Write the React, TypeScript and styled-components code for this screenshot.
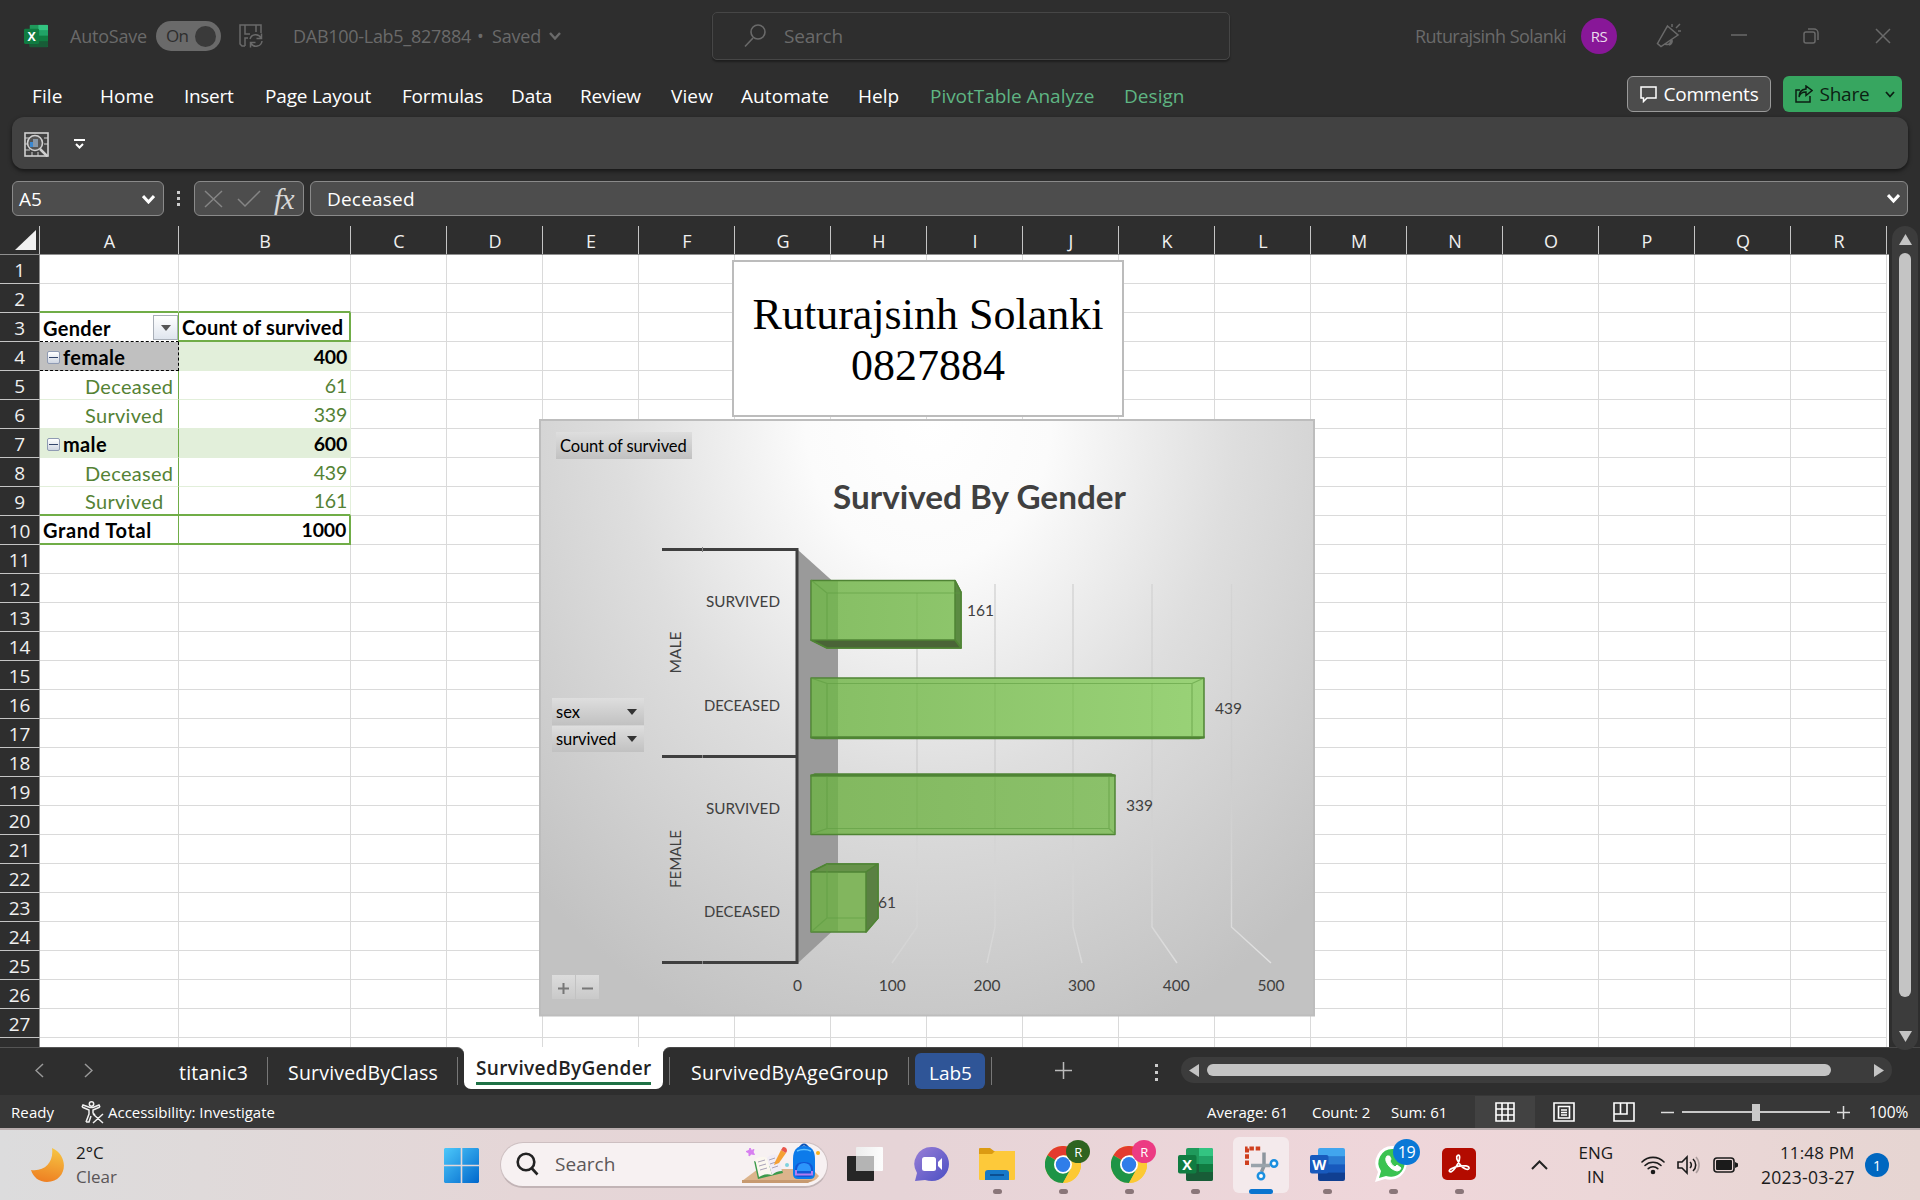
import React from "react";
import styled, { createGlobalStyle } from "styled-components";

const UI = '"Open Sans", "Noto Sans", sans-serif';
const CAL = 'Lato, "Open Sans", sans-serif';

const Global = createGlobalStyle`
  * { box-sizing: border-box; }
  body { margin: 0; background: #2e2e2e; overflow: hidden; }
  svg { display: block; flex: none; }
`;

const Screen = styled.div`
  width: 1920px; height: 1200px; overflow: hidden;
  display: flex; flex-direction: column;
  font-family: ${UI}; color: #fff; background: #2e2e2e;
`;

const Gap = styled.div<{ $w: number }>`flex: none; width: ${(p) => p.$w}px;`;

const T = styled.span<{ $w?: number; $size?: number; $ls?: number; $c?: string; $b?: number; $ml?: number; $cal?: boolean }>`
  flex: none; white-space: nowrap;
  width: ${(p) => (p.$w ? p.$w + "px" : "auto")};
  margin-left: ${(p) => p.$ml ?? 0}px;
  font-family: ${(p) => (p.$cal ? CAL : UI)};
  font-size: ${(p) => p.$size ?? 18}px;
  letter-spacing: ${(p) => p.$ls ?? 0}px;
  font-weight: ${(p) => p.$b ?? 400};
  color: ${(p) => p.$c ?? "inherit"};
  line-height: 24px;
`;
const Fx = styled(T)`font-family: "Liberation Serif", serif; font-style: italic;`;

/* ---------- title bar ---------- */
const TitleBar = styled.header`
  height: 72px; flex: none; display: flex; align-items: center; color: #6a6a6a;
`;
const Toggle = styled.div`
  width: 65px; height: 30px; border-radius: 15px; margin: 0 18px 0 9px; padding: 0 5px 0 10px;
  background: #6a6a6a; color: #2e2e2e; display: flex; align-items: center; justify-content: space-between;
`;
const Knob = styled.i`width: 21px; height: 21px; border-radius: 50%; background: #3a3a3a;`;
const TopSearch = styled.div`
  width: 518px; height: 48px; border: 1px solid #464646; border-radius: 5px; margin-left: 151px;
  padding-left: 31px; display: flex; align-items: center; box-shadow: 0 2px 2px rgba(0,0,0,.35);
`;
const Avatar = styled.div`
  width: 36px; height: 36px; border-radius: 50%; background: #881798; color: #eadcec;
  display: flex; align-items: center; justify-content: center; margin-left: 15px;
`;

/* ---------- menu ---------- */
const Menu = styled.nav`height: 45px; flex: none; display: flex; align-items: center; padding-top: 3px;`;
const Button = styled.button<{ $green?: boolean }>`
  height: 36px; width: ${(p) => (p.$green ? 119 : 144)}px; border-radius: 6px; padding: 0 0 0 12px; margin: -4px 0 0;
  border: ${(p) => (p.$green ? "none" : "1px solid #9a9a9a")};
  background: ${(p) => (p.$green ? "#37a660" : "#4c4c4c")};
  color: ${(p) => (p.$green ? "#0c1f13" : "#fff")};
  display: flex; align-items: center;
`;
const Ribbon = styled.div`
  height: 52px; flex: none; margin: 0 12px; border-radius: 12px; background: #424242;
  box-shadow: 0 2px 4px rgba(0,0,0,.55); display: flex; align-items: center; padding: 2px 0 0 12px;
`;
const FormulaBar = styled.div`
  flex: none; height: 57px; padding: 12px 12px 0; display: flex; align-items: flex-start;
`;
const Box = styled.div<{ $w?: number; $pl: number }>`
  height: 35px; border: 1px solid #8a8a8a; border-radius: 6px; background: #4d4d4d;
  display: flex; align-items: center; padding-left: ${(p) => p.$pl}px; padding-right: 7px;
  ${(p) => (p.$w ? `width:${p.$w}px;flex:none;` : "flex:1;justify-content:space-between;")}
`;

/* ---------- grid ---------- */
const Work = styled.div`height: 821px; flex: none; display: flex; position: relative;`;
const Sheet = styled.div`width: 1889px; height: 821px; overflow: hidden;`;
const HeadRow = styled.div`display: flex; height: 29px; border-bottom: 1px solid #8f8f8f;`;
const ColHead = styled.div<{ $w: number }>`
  width: ${(p) => p.$w}px; flex: none; border-right: 1px solid #c4c4c4; color: #f0f0f0;
  font-size: 18px; line-height: 31px; text-align: center; padding-left: 1px;
`;
const Corner = styled.div`
  width: 40px; flex: none; border-right: 1px solid #c4c4c4; display: flex; align-items: flex-end; justify-content: flex-end; padding: 0 3px 4px;
`;
const Row = styled.div`display: flex; height: 29px; background: #fff;`;
const RowHead = styled.div`
  width: 40px; flex: none; background: #2e2e2e; border-right: 1px solid #8f8f8f; border-bottom: 1px solid #c4c4c4;
  color: #f0f0f0; font-size: 19px; line-height: 30px; text-align: center; letter-spacing: -0.2px;
`;
const Cell = styled.div<{ $w: number; $bg?: string; $bb?: string; $br?: string; $right?: boolean; $pl?: number }>`
  width: ${(p) => p.$w}px; flex: none; display: flex; align-items: center; color: #000;
  justify-content: ${(p) => (p.$right ? "flex-end" : "flex-start")};
  padding: 1px 3px 0 ${(p) => p.$pl ?? 3}px;
  background: ${(p) => p.$bg ?? "#fff"};
  border-bottom: ${(p) => p.$bb ?? "1px solid #dadada"};
  border-right: ${(p) => p.$br ?? "1px solid #dadada"};
`;
const FilterBtn = styled.div`
  width: 25px; height: 25px; margin: 0 -3px 0 auto; border: 1px solid #a9afb8; flex: none;
  background: linear-gradient(#fff, #dfe5ee); display: flex; align-items: center; justify-content: center;
`;
const Minus = styled.div`
  width: 13px; height: 13px; flex: none; border: 1px solid #8f9bb3; border-radius: 2px; margin: 1px 3px 0 0;
  background: linear-gradient(#fff, #cfd6e2); display: flex; align-items: center; justify-content: center;
  &::after { content: ""; width: 9px; height: 1px; background: #34466b; }
`;
const NameCard = styled.div`
  position: absolute; left: 732px; top: 34px; width: 392px; height: 157px; background: #fff; border: 2px solid #bcbcbc;
  display: flex; flex-direction: column; align-items: center; padding-top: 27px; color: #000;
  font: 44px/51px "Liberation Serif", serif;
`;
const ChartBox = styled.div`position: absolute; left: 539px; top: 192px; width: 777px; height: 600px;`;
const Field = styled.div<{ $x: number; $y: number; $w: number; $h?: number }>`
  position: absolute; left: ${(p) => p.$x}px; top: ${(p) => p.$y}px; width: ${(p) => p.$w}px; height: ${(p) => p.$h ?? 27}px;
  background: linear-gradient(#dedede, #c1c1c1); color: #000; display: flex; align-items: center; justify-content: space-between; padding: 0 7px 0 4px;
`;
const SmallField = styled(Field)`
  padding: 3px 0 0; justify-content: center; background: linear-gradient(#dcdcdc, #c9c9c9);
`;
const VScroll = styled.div`
  width: 26px; height: 824px; margin-left: 3px; background: #3c3c3c; border-radius: 13px; flex: none;
  display: flex; flex-direction: column; align-items: center; padding: 8px 0;
`;
const VThumb = styled.div`width: 12px; height: 744px; border-radius: 6px; background: #c4c4c4; margin: 8px 0 auto;`;

/* ---------- tabs / status ---------- */
const TabBar = styled.div`height: 48px; flex: none; display: flex; align-items: flex-start; background: linear-gradient(#fff 10px, #2e2e2e 10px);`;
const TabsLeft = styled.div`
  width: 464px; height: 48px; display: flex; align-items: center; padding-top: 2px; background: #2e2e2e;
  border-top: 1px solid #555; border-top-right-radius: 7px;
`;
const TabsRight = styled.div`
  flex: 1; height: 48px; display: flex; align-items: center; background: #2e2e2e; padding-top: 2px;
  border-top: 1px solid #484848; border-top-left-radius: 7px;
`;
const ActiveTab = styled.div`
  width: 199px; height: 42px; background: #fff; border-radius: 0 0 7px 7px; padding: 8px 12px 0; color: #222;
`;
const TabText = styled.div`width: 175px; height: 30px; border-bottom: 3px solid #1e7145; display: flex; align-items: center; padding-bottom: 2px;`;
const Sep = styled.i<{ $ml: number }>`width: 1px; height: 28px; background: #777; margin-left: ${(p) => p.$ml}px; margin-top: -4px; flex: none;`;
const BlueTab = styled.div`
  width: 70px; height: 36px; border-radius: 6px; background: #2f5597; margin: -3px 0 0 6px; display: flex; align-items: center; justify-content: center; padding-top: 3px;
`;
const HScroll = styled.div`
  width: 711px; height: 26px; border-radius: 13px; background: #3c3c3c; margin: -5px 0 0 22px; display: flex; align-items: center; padding: 0 8px;
`;
const HThumb = styled.div`width: 624px; height: 12px; border-radius: 6px; background: #c4c4c4; margin: 0 auto 0 8px;`;
const Raised = styled.div`margin-top: -4px; display: flex;`;
const Status = styled.div`height: 33px; flex: none; background: #373737; display: flex; align-items: center; padding-top: 1px;`;
const ViewOn = styled.div`width: 60px; height: 32px; background: #424242; margin-left: 28px; display: flex; align-items: center; justify-content: center;`;
const Slider = styled.div`width: 148px; height: 2px; background: #c8c8c8; margin-left: 8px; display: flex; justify-content: center; align-items: center;`;
const SliderThumb = styled.i`width: 8px; height: 17px; background: #c8c8c8; flex: none;`;

/* ---------- taskbar ---------- */
const TaskBar = styled.footer`
  height: 72px; flex: none; border-top: 2px solid #b9adae; display: flex; align-items: center; color: #1b1b1b;
  background: linear-gradient(90deg, #dcdcdd 0, #dfdada 200px, #e5d6d7 520px, #e6d4d7 900px, #efd6da 1400px, #ecd7d8 1600px, #e6d5d2 1920px);
`;
const TwoLine = styled.div<{ $ml: number; $align?: string; $w: number }>`
  display: flex; flex-direction: column; margin-left: ${(p) => p.$ml}px; width: ${(p) => p.$w}px; align-items: ${(p) => p.$align ?? "flex-start"}; margin-top: -1px;
`;
const Pill = styled.div`
  width: 328px; height: 46px; border-radius: 23px; background: #f7f1f2; border: 1px solid #cdbfc1; border-bottom: 2px solid #c2b4b6;
  margin: -1px 0 0 21px; display: flex; align-items: center; padding-left: 15px;
`;
const Slot = styled.div<{ $on?: boolean }>`
  width: 56px; height: 56px; margin: 0 5px; flex: none; position: relative; border-radius: 6px;
  display: flex; align-items: center; justify-content: center; padding-bottom: 2px; background: ${(p) => (p.$on ? "#f4eaec" : "transparent")};
`;
const Ind = styled.i<{ $on?: boolean }>`
  position: absolute; bottom: -1px; left: ${(p) => (p.$on ? 16 : 24)}px; width: ${(p) => (p.$on ? 24 : 9)}px; height: 5px; border-radius: 3px;
  background: ${(p) => (p.$on ? "#0a74cf" : "#8a7679")};
`;
const Badge = styled.span<{ $bg: string; $s: number; $x: number; $y: number; $fs: number }>`
  position: absolute; left: ${(p) => p.$x}px; top: ${(p) => p.$y}px; width: ${(p) => p.$s}px; height: ${(p) => p.$s - 1}px; border-radius: 50%;
  background: ${(p) => p.$bg}; color: #fff; font-size: ${(p) => p.$fs}px; display: flex; align-items: center; justify-content: center; letter-spacing: -0.5px;
`;
const NoticeDot = styled.div`
  width: 24px; height: 24px; border-radius: 50%; background: #0067c0; color: #fff; font-size: 14px; margin-left: 10px;
  display: flex; align-items: center; justify-content: center;
`;

/* ---------- icons ---------- */
const Stroke: React.FC<{ w: number; h?: number; vb?: string; c?: string; sw?: number; d: string; children?: React.ReactNode }> = ({ w, h = w, vb, c = "currentColor", sw = 1.5, d, children }) => (
  <svg width={w} height={h} viewBox={vb ?? `0 0 ${w} ${h}`} fill="none" stroke={c} strokeWidth={sw}>
    <path d={d} />
    {children}
  </svg>
);

const OfficeIcon = ({ size, letter, tile, cols = [] }: { size: number; letter: string; tile: string; cols?: string[] }) => (
  <svg width={size} height={size} viewBox="0 0 35 35">
    <clipPath id={`oc${letter}${size}`}><rect x="8" y="1" width="27" height="33" rx="2" /></clipPath>
    <g clipPath={`url(#oc${letter}${size})`}>
      {letter === "X" ? (
        <>
          <rect x="8" y="1" width="27" height="33" fill="#1f9a5b" />
          <rect x="21" y="1" width="14" height="9" fill="#33c481" />
          <rect x="21" y="9" width="14" height="9" fill="#21a366" />
          <rect x="8" y="17" width="14" height="9" fill="#185c37" />
          <rect x="21" y="17" width="14" height="9" fill="#107c41" />
          <rect x="8" y="25" width="27" height="9" fill="#185c37" />
        </>
      ) : cols.map((c, i) => <rect key={c} x="8" y={1 + i * 8.2} width="27" height="9" fill={c} />)}
    </g>
    <rect x="0" y={letter === "X" && size < 30 ? 7 : 8} width={size < 30 ? 22 : 18.5} height={size < 30 ? 22 : 18.5} rx="2" fill={tile} />
    <text x={size < 30 ? 11 : 9.2} y={size < 30 ? 24.5 : 22.5} fontSize={size < 30 ? 18 : 14.5} fontWeight="700" fontFamily={UI} fill="#fff" textAnchor="middle">{letter}</text>
  </svg>
);

const Chrome = () => (
  <svg width="36" height="37" viewBox="0 0 36 36" preserveAspectRatio="none">
    <circle cx="18" cy="18" r="18" fill="#fcc934" />
    <path d="M18 18 L2.400 9 A18 18 0 0 1 33.600 9 Z" fill="#e33b2e" />
    <path d="M18 18 L2.400 9 A18 18 0 0 0 18 36 L26 22 Z" fill="#1e9446" />
    <path d="M18 9 H33.600 A18 18 0 0 1 18 36 L26 22 Z" fill="#fcc934" />
    <circle cx="18" cy="18" r="9" fill="#fff" />
    <circle cx="18" cy="18" r="7.200" fill="#2f7de9" />
  </svg>
);

const Wifi = () => (
  <svg width="24" height="20" viewBox="0 0 24 20" fill="none" stroke="#1b1b1b" strokeWidth="1.600" strokeLinecap="round">
    <path d="M1 7 A15.500 15.500 0 0 1 23 7" /><path d="M4 10.500 A11.500 11.500 0 0 1 20 10.500" /><path d="M7.200 13.700 A7 7 0 0 1 16.800 13.700" />
    <circle cx="12" cy="17" r="1.500" fill="#1b1b1b" />
  </svg>
);

const Backpack = () => (
  <svg width="80" height="42" viewBox="0 0 80 42">
    <path d="M0 38 L16 26 H70 L77 33 Q73 39 66 39 H0 Z" fill="#dcb48c" />
    <path d="M0 37 H71 L66 40 H0 Z" fill="#c79a70" />
    <path d="M12 18 L16 36 L41 30 L40 27 Z" fill="#3c9a4a" />
    <path d="M13 16 Q20 12 25 15 L30 32 Q23 30 17 34 Z" fill="#fbf7ef" />
    <path d="M25 15 Q29 10 36 12 L40 28 Q34 28 30 32 Z" fill="#f1ecf5" />
    <path d="M16 19l7-2M17 23l7-2M18 27l7-2M27 17l6-2M28 21l6-2M30 25l6-2" stroke="#a9a3b8" strokeWidth="1" />
    <path d="M33 19 L39 7 L44 10 L37 20 L32 22 Z" fill="#f5a033" /><path d="M39 7 L41 4 Q45 4 45 8 L44 10 Z" fill="#e9564c" />
    <path d="M57 6 Q62 -3 67 6" fill="none" stroke="#0c54b8" strokeWidth="2" />
    <path d="M51 16 Q51 3 62 3 Q73 3 73 16 V31 Q73 36 68 36 H56 Q51 36 51 31 Z" fill="#0d7bea" />
    <path d="M55 8 Q62 5 69 8" fill="none" stroke="#5fc0ff" strokeWidth="1.500" />
    <path d="M53 26 Q53 19 62 19 Q71 19 71 26 V31 Q71 34 67 34 H57 Q53 34 53 31 Z" fill="#1257d6" />
    <path d="M55 26 Q56 20 62 20 Q68 20 69 26 V28 H55 Z" fill="#2d96fb" /><path d="M54 27V31.500 H70V28" fill="none" stroke="#b37cf0" strokeWidth="2" />
    <path d="M8 5 L9.500 7.500 L12 6.500 L11 9 L12.500 11.500 L9.500 11 L7 13 L7 10 L4 8.500 L7 7.500 Z" fill="#d77ff0" stroke="#d77ff0" />
    <circle cx="45" cy="22" r="2" fill="#7fd2de" /><circle cx="76" cy="10" r="2" fill="#f6b21b" />
  </svg>
);

const Arrow = ({ c = "#333" }: { c?: string }) => <svg width="10" height="6"><path d="M0 0H10L5 6Z" fill={c} /></svg>;

/* ---------- chart ---------- */
const EDGE = "#4f8434";
const Chart = () => {
  const txt = (x: number, y: number, s: string, len: number, anchor: "start" | "middle" | "end" = "middle") => (
    <text key={s + x + y} x={x} y={y} fontSize="15.500" textAnchor={anchor} textLength={len} lengthAdjust="spacingAndGlyphs">{s}</text>
  );
  const grid = [[917, 892], [995, 987], [1073, 1082], [1152, 1177], [1231.5, 1271]];
  return (
    <svg width="777" height="600" viewBox="539 418 777 600" fontFamily={CAL} fill="#404040">
      <defs>
        <radialGradient id="bg" gradientUnits="userSpaceOnUse" cx="928" cy="419" r="600" gradientTransform="translate(928 419) scale(.93 1.100) translate(-928 -419)">
          <stop offset="0" stopColor="#fff" /><stop offset=".22" stopColor="#fbfbfb" /><stop offset=".55" stopColor="#dedede" /><stop offset="1" stopColor="#c2c2c2" />
        </radialGradient>
        <linearGradient id="bar" gradientUnits="userSpaceOnUse" x1="811" x2="1204" y1="0" y2="0">
          <stop offset="0" stopColor="#86be64" /><stop offset="1" stopColor="#99d277" />
        </linearGradient>
        <linearGradient id="bar2" gradientUnits="userSpaceOnUse" x1="811" x2="1115" y1="0" y2="0">
          <stop offset="0" stopColor="#82b85f" /><stop offset="1" stopColor="#8bc16a" />
        </linearGradient>
        {grid.map(([a], i) => (
          <linearGradient key={a} id={`gl${i}`} gradientUnits="userSpaceOnUse" x1="0" x2="0" y1="584" y2="963">
            <stop offset="0" stopColor="#d4d4d4" /><stop offset=".5" stopColor="#cdcdcd" /><stop offset=".85" stopColor="#d8d8d8" stopOpacity={0.3 + i * 0.17} />
            <stop offset="1" stopColor="#e2e2e2" stopOpacity={0.4 + i * 0.15} />
          </linearGradient>
        ))}
      </defs>
      <rect x="540" y="420" width="774" height="595.500" fill="url(#bg)" stroke="#bdbdbd" strokeWidth="2" />
      {grid.map(([a, b], i) => <path key={a} d={`M${a} 584V927L${b} 963`} fill="none" stroke={`url(#gl${i})`} strokeWidth="1.400" />)}
      <path d="M798 550L838 586V926L798 963Z" fill="#9a9a9a" />

      <g stroke={EDGE} strokeWidth="1.500" strokeLinejoin="round">
        <path d="M811 580.500H955L961 592V648H827L811 640Z" fill="url(#bar)" />
        <path d="M955 580.500L961 592V648L955 640Z" fill="#5b8a42" />
        <path d="M811 640H955L961 648H827Z" fill="#4a6437" />
        <path d="M811 678H1204V738H811Z" fill="url(#bar)" />
        <path d="M811 737H1204L1199 738.500H815Z" fill={EDGE} />
        <path d="M811 775H1115V834.500H811Z" fill="url(#bar2)" />
        <path d="M815 774H1111L1115 776H811Z" fill={EDGE} />
        <path d="M811 872L827 864H878V918L866 932H811Z" fill="#82b65e" />
        <path d="M811 872L827 864H878L866 872Z" fill="#669249" />
        <path d="M866 872L878 864V918L866 932Z" fill="#5a8043" />
      </g>
      <g fill="#5f9c41" opacity=".35">
        <rect x="811" y="581" width="27" height="59" /><rect x="811" y="679" width="27" height="58" />
        <rect x="811" y="777" width="27" height="57" /><rect x="811" y="873" width="27" height="58" />
      </g>
      <g fill="none" stroke="#5f9c41" strokeOpacity=".6" strokeWidth="1.200">
        <path d="M811 580L827 593V639M827 593H960" />
        <path d="M811 678L827 683.500V737M827 683.500H1192V737M1192 683.500L1204 678" />
        <path d="M827 776V828.500L811 834M827 828.500H1109V776M1109 828.500L1115 834" />
        <path d="M827 864V918L811 932M827 918H866" />
        <path d="M917 593V639M917 683V736M995 683V736M1073 683V736M1152 683V736M917 776V828M995 776V828M1073 776V828" strokeOpacity=".2" />
      </g>

      <path d="M662 549.500H797V962.500H662M662 756.500H797" fill="none" stroke="#3f3f3f" strokeWidth="3" />
      <path d="M702.500 547V552M702.500 755V758M702.500 961V964" stroke="#888" strokeWidth="1" />

      <text x="979.500" y="508.500" fontSize="32" fontWeight="700" textAnchor="middle" textLength="293" lengthAdjust="spacingAndGlyphs">Survived By Gender</text>
      {txt(780, 606.5, "SURVIVED", 74, "end")}{txt(780, 711, "DECEASED", 76, "end")}
      {txt(780, 814, "SURVIVED", 74, "end")}{txt(780, 917, "DECEASED", 76, "end")}
      {txt(967, 616, "161", 27, "start")}{txt(1215, 713.5, "439", 27, "start")}{txt(1126, 811, "339", 27, "start")}{txt(878, 908, "61", 18, "start")}
      <g transform="translate(681 652.500) rotate(-90)">{txt(0, 0, "MALE", 42)}</g>
      <g transform="translate(681 859) rotate(-90)">{txt(0, 0, "FEMALE", 58)}</g>
      {[0, 100, 200, 300, 400, 500].map((n, i) => txt(797.5 + i * 94.7, 991, String(n), n ? 27 : 9))}
    </svg>
  );
};

/* ---------- grid data ---------- */
const G = "#70ad47", GT = "#548235", LG = "1px solid #e2efda";
const cols = ["C", "D", "E", "F", "G", "H", "I", "J", "K", "L", "M", "N", "O", "P", "Q", "R"];
const gb = `2px solid ${G}`, g1 = `1px solid ${G}`, dash = "1px dashed #000";

const Num = ({ children, bold }: { children: string; bold?: boolean }) => (
  <T $cal $size={19.5} $ls={-0.2} $b={bold ? 700 : 400} $c={bold ? "#000" : GT}>{children}</T>
);
const Bold = ({ children, ls = 0.3 }: { children: string; ls?: number }) => <T $cal $size={20} $b={700} $ls={ls}>{children}</T>;

const SubRow = ({ label, value, last }: { label: string; value: string; last?: boolean }) => (
  <>
    <Cell $w={139} $pl={45} $bb={last ? gb : LG} $br={g1}><T $cal $size={20} $ls={0.3} $c={GT}>{label}</T></Cell>
    <Cell $w={172} $right $bb={last ? gb : LG} $br={LG}><Num>{value}</Num></Cell>
  </>
);
const GroupRow = ({ label, value, active }: { label: string; value: string; active?: boolean }) => (
  <>
    <Cell $w={139} $bg={active ? "#c0c0c0" : "#e2efda"} $bb={active ? dash : LG} $br={active ? dash : g1} $pl={7}><Minus /><Bold ls={0.35}>{label}</Bold></Cell>
    <Cell $w={172} $right $bg="#e2efda" $bb={LG} $br={LG}><Num bold>{value}</Num></Cell>
  </>
);

const pivotCells = (n: number) => {
  switch (n) {
    case 2: return <><Cell $w={139} $bb={gb} /><Cell $w={172} $bb={gb} /></>;
    case 3: return <>
      <Cell $w={139} $bb={dash} $br={g1}><Bold>Gender</Bold><FilterBtn><Arrow c="#555" /></FilterBtn></Cell>
      <Cell $w={172} $bb={gb} $br={gb}><Bold ls={0.22}>Count of survived</Bold></Cell></>;
    case 4: return <GroupRow label="female" value="400" active />;
    case 5: return <SubRow label="Deceased" value="61" />;
    case 6: return <SubRow label="Survived" value="339" />;
    case 7: return <GroupRow label="male" value="600" />;
    case 8: return <SubRow label="Deceased" value="439" />;
    case 9: return <SubRow label="Survived" value="161" last />;
    case 10: return <>
      <Cell $w={139} $bb={gb} $br={g1}><Bold ls={0.6}>Grand Total</Bold></Cell>
      <Cell $w={172} $right $bb={gb} $br={gb}><Num bold>1000</Num></Cell></>;
    default: return <><Cell $w={139} /><Cell $w={172} /></>;
  }
};

/* label, left gap, width, letter spacing */
const menu: [string, number, number, number][] = [
  ["File", 32, 30, 0.1], ["Home", 38, 54, 0.07], ["Insert", 30, 50, -0.3], ["Page Layout", 31, 106, -0.16], ["Formulas", 31, 81, -0.21],
  ["Data", 28, 42, -0.1], ["Review", 27, 61, -0.2], ["View", 30, 42, 0.12], ["Automate", 28, 89, 0.07], ["Help", 28, 42, 0],
  ["PivotTable Analyze", 30, 166, -0.04], ["Design", 28, 62, 0.05],
];

export default function App() {
  return (
    <Screen>
      <Global />
      <TitleBar>
        <Gap $w={24} />
        <OfficeIcon size={24} letter="X" tile="#107c41" />
        <T $ml={22} $w={77} $ls={-0.21}>AutoSave</T>
        <Toggle><T $size={17} $w={22} $ls={-0.6}>On</T><Knob /></Toggle>
        <Stroke w={24} d="M6 22H3L1 20V1H22V9M6 1V10H11M17 1V8M6 22V14H9">
          <path d="M11 15A6 6 0 0 1 22 14M22.500 9.500V14.500H17.500M23 17A6 6 0 0 1 12 19.500M11.500 23.500V18.500H16.500" />
        </Stroke>
        <T $ml={30} $w={178} $ls={-0.28}>DAB100-Lab5_827884</T>
        <T $ml={6} $w={8}>•</T>
        <T $ml={7} $w={50} $ls={-0.2}>Saved</T>
        <Gap $w={7} />
        <Stroke w={12} h={8} sw={2.4} d="M1 1L6 6.500L11 1" />
        <TopSearch>
          <Stroke w={22} h={24} sw={1.6} d="M9 14L1 22.500"><circle cx="14" cy="8" r="7" /></Stroke>
          <T $ml={18} $size={19} $w={59} $ls={-0.2}>Search</T>
        </TopSearch>
        <T $ml={185} $w={151} $ls={-0.56}>Ruturajsinh Solanki</T>
        <Avatar><T $size={15} $ls={-0.5}>RS</T></Avatar>
        <Gap $w={39} />
        <Stroke w={26} d="M11.500 3L22 12L5 23.500L1.500 20.500ZM9 21A4 4 0 0 0 15 17M16 1V4M24 1L20 5M22 8H25M13 22A4 4 0 0 0 16 17" />
        <Gap $w={49} />
        <Stroke w={16} h={20} d="M0 9H16" />
        <Gap $w={56} />
        <Stroke w={16} d="M3 4H10A2 2 0 0 1 12 6V13A2 2 0 0 1 10 15H3A2 2 0 0 1 1 13V6A2 2 0 0 1 3 4ZM5 1H11A4 4 0 0 1 15 5V12" />
        <Gap $w={56} />
        <Stroke w={16} d="M1 1L15 15M15 1L1 15" />
      </TitleBar>

      <Menu>
        {menu.map(([s, ml, w, ls], i) => <T key={s} $size={19} $ml={ml} $w={w} $ls={ls} $c={i > 9 ? "#5fb583" : "#fff"}>{s}</T>)}
        <Gap $w={441} />
        <Button><Stroke w={17} h={17} d="M1 1H16V12H7L3.500 15.500V12H1Z" /><T $ml={6} $size={19} $w={96} $ls={-0.22}>Comments</T></Button>
        <Gap $w={12} />
        <Button $green>
          <Stroke w={18} h={18} d="M5 5H1V17H15V11M4 12C5 8 8 7 11 7V10.500L17 5.500L11 1V4C6 4.500 4 8 4 12Z" />
          <T $ml={6} $size={19} $w={51} $ls={-0.2}>Share</T><Gap $w={15} /><Stroke w={10} h={7} sw={1.8} d="M1 1L5 5.500L9 1" />
        </Button>
      </Menu>

      <Ribbon>
        <svg width="25" height="25" viewBox="0 0 25 25" fill="none" stroke="#d0d0d0" strokeWidth="1.600">
          <rect x="1" y="1" width="23" height="23" /><path d="M1 6H5M20 6H24M1 12H4M20 12H24M1 18H6M8 20V24M14 20V24" strokeWidth="1" />
          <circle cx="11" cy="11" r="7.500" fill="#555" /><rect x="6" y="10" width="4" height="5" fill="#3a87d0" stroke="none" /><rect x="9" y="7" width="5" height="8" fill="#8796a6" stroke="none" />
          <path d="M16 17L23.500 24.500" strokeWidth="2.500" />
        </svg>
        <Gap $w={25} />
        <Stroke w={11} h={10} sw={2} c="#fff" d="M0 1H11M2 5L5.500 8.500L9 5" />
      </Ribbon>

      <FormulaBar>
        <Box $w={152} $pl={6}>
          <T $size={19} $w={24}>A5</T><Gap $w={99} /><Stroke w={13} h={10} sw={3} c="#fff" d="M1 2L6.500 8L12 2" />
        </Box>
        <Gap $w={13} />
        <svg width="4" height="35" fill="#ccc"><rect y="10" width="3" height="3" /><rect y="16" width="3" height="3" /><rect y="22" width="3" height="3" /></svg>
        <Gap $w={13} />
        <Box $w={110} $pl={9}>
          <Stroke w={19} h={18} c="#858585" d="M1 1L18 17M18 1L1 17" /><Gap $w={14} />
          <Stroke w={24} h={18} c="#858585" d="M1 9L8 16L23 1" /><Gap $w={13} />
          <Fx $size={30} $ls={-1} $c="#d8d8d8">fx</Fx>
        </Box>
        <Gap $w={6} />
        <Box $pl={16}>
          <T $size={19} $w={88} $ls={0.2}>Deceased</T><Stroke w={13} h={10} sw={3} c="#fff" d="M1 1L6.500 7L12 1" />
        </Box>
      </FormulaBar>

      <Work>
        <Sheet>
          <HeadRow>
            <Corner><svg width="21" height="20"><path d="M21 0V20H0Z" fill="#f0f0f0" /></svg></Corner>
            <ColHead $w={139}>A</ColHead><ColHead $w={172}>B</ColHead>
            {cols.map((c) => <ColHead key={c} $w={96}>{c}</ColHead>)}
          </HeadRow>
          {Array.from({ length: 28 }, (_, i) => i + 1).map((n) => (
            <Row key={n}><RowHead>{n}</RowHead>{pivotCells(n)}{cols.map((c) => <Cell key={c} $w={96} />)}</Row>
          ))}
        </Sheet>
        <VScroll>
          <svg width="13" height="11"><path d="M6.500 0L13 11H0Z" fill="#c4c4c4" /></svg>
          <VThumb />
          <svg width="13" height="11"><path d="M0 0H13L6.500 11Z" fill="#c4c4c4" /></svg>
        </VScroll>
        <NameCard><div>Ruturajsinh Solanki</div><div>0827884</div></NameCard>
        <ChartBox>
          <Chart />
          <Field $x={17} $y={14} $w={136}><T $cal $size={16.5} $ls={-0.12}>Count of survived</T></Field>
          <Field $x={13} $y={280} $w={92}><T $cal $size={16.5}>sex</T><Arrow /></Field>
          <Field $x={13} $y={308} $w={92} $h={26}><T $cal $size={16.5} $ls={-0.1}>survived</T><Arrow /></Field>
          <SmallField $x={13} $y={557} $w={23} $h={24}><Stroke w={11} c="#777" sw={2} d="M5.500 0V11M0 5.500H11" /></SmallField>
          <SmallField $x={37} $y={557} $w={23} $h={24}><Stroke w={11} c="#777" sw={2} d="M0 5.500H11" /></SmallField>
        </ChartBox>
      </Work>

      <TabBar>
        <TabsLeft>
          <Gap $w={35} /><Raised><Stroke w={9} h={15} c="#999" d="M8 1L1 7.500L8 14" /><Gap $w={40} /><Stroke w={9} h={15} c="#999" d="M1 1L8 7.500L1 14" /></Raised>
          <T $ml={86} $size={19.5} $w={69} $ls={0.25}>titanic3</T><Sep $ml={19} />
          <T $ml={20} $size={19.5} $w={150} $ls={0.2}>SurvivedByClass</T><Sep $ml={19} />
        </TabsLeft>
        <ActiveTab><TabText><T $size={19} $b={600} $w={176} $ls={0.38}>SurvivedByGender</T></TabText></ActiveTab>
        <TabsRight>
          <Sep $ml={6} /><T $ml={21} $size={19.5} $w={198} $ls={0.32}>SurvivedByAgeGroup</T><Sep $ml={19} />
          <BlueTab><T $size={19} $w={42}>Lab5</T></BlueTab><Sep $ml={6} />
          <Gap $w={63} /><Raised><Stroke w={17} c="#bbb" d="M8.500 0V17M0 8.500H17" /></Raised>
          <Gap $w={83} /><svg width="4" height="20" fill="#ccc"><rect y="1" width="3" height="3" /><rect y="8" width="3" height="3" /><rect y="15" width="3" height="3" /></svg>
          <HScroll><svg width="10" height="13"><path d="M10 0V13L0 6.500Z" fill="#c4c4c4" /></svg><HThumb /><svg width="10" height="13"><path d="M0 0V13L10 6.500Z" fill="#c4c4c4" /></svg></HScroll>
        </TabsRight>
      </TabBar>

      <Status>
        <T $ml={11} $size={15} $w={44} $ls={0.1}>Ready</T><Gap $w={26} />
        <Stroke w={23} h={23} c="#f0f0f0" d="M1 6L8 9V13L5 21M19 6L12 9V12L14 14M5 21L8 21L10 15M1 6L2 4L9 6.500H12L18 4L19 6M12 13L22 22M22 13L12 22"><circle cx="10.500" cy="3" r="2.200" /></Stroke>
        <T $ml={4} $size={15} $w={167} $ls={-0.02}>Accessibility: Investigate</T>
        <T $ml={932} $size={15} $w={82}>Average: 61</T>
        <T $ml={23} $size={15} $w={58} $ls={-0.05}>Count: 2</T>
        <T $ml={21} $size={15} $w={56}>Sum: 61</T>
        <ViewOn><Stroke w={20} sw={1.6} d="M1 1H19V19H1ZM7 1V19M13 1V19M1 7H19M1 13H19" /></ViewOn>
        <Gap $w={18} /><Stroke w={22} h={20} sw={1.6} d="M1 1H21V19H1ZM5.500 4.500H16.500V16H5.500ZM8 8H14M8 10.500H14M8 13H14" />
        <Gap $w={38} /><Stroke w={22} h={20} sw={1.6} d="M1 1H21V19H1ZM1 12H14V1M7.500 1V12" />
        <Gap $w={26} /><Stroke w={13} c="#ddd" d="M0 6.500H13" />
        <Slider><SliderThumb /></Slider>
        <Gap $w={7} /><Stroke w={13} c="#ddd" d="M0 6.500H13M6.500 0V13" />
        <T $ml={19} $size={15.5} $w={40}>100%</T>
      </Status>

      <TaskBar>
        <Gap $w={30} />
        <svg width="35" height="36" viewBox="0 0 35 36"><defs><linearGradient id="mn" x1=".6" x2=".4" y1="0" y2="1"><stop offset="0" stopColor="#f6c443" /><stop offset="1" stopColor="#ee7f22" /></linearGradient></defs><path d="M22 1C40 9 37 35 17 35C9 35 3 30 1 23C15 25 24 15 22 1Z" fill="url(#mn)" /></svg>
        <TwoLine $ml={11} $w={42}><T $size={17} $w={28}>2°C</T><T $size={17} $w={41} $c="#5a5557">Clear</T></TwoLine>
        <Gap $w={326} />
        <svg width="35" height="35" viewBox="0 0 35 35"><defs><linearGradient id="win" x1="0" y1="0" x2="1" y2="1"><stop offset="0" stopColor="#4cc8fa" /><stop offset="1" stopColor="#0067cc" /></linearGradient></defs><path d="M1 0H16.700V16.700H0V1ZM18.300 0H34L35 1V16.700H18.300ZM0 18.300H16.700V35H1L0 34ZM18.300 18.300H35V34L34 35H18.300Z" fill="url(#win)" /></svg>
        <Pill>
          <Stroke w={23} h={24} sw={2.6} c="#222" d="M15.500 16L21.500 22.500"><circle cx="10" cy="10" r="8.300" /></Stroke>
          <T $ml={16} $size={19} $w={61} $ls={0.05} $c="#5c5758">Search</T><Gap $w={126} /><Backpack />
        </Pill>
        <Gap $w={4} />
        <Slot><svg width="36" height="36" viewBox="0 0 36 36"><defs><linearGradient id="tv" x1="0" y1="0" x2="1" y2="0"><stop offset="0" stopColor="#ededed" /><stop offset="1" stopColor="#fcfcfc" /></linearGradient></defs><rect x="0" y="10" width="27" height="25" rx="1" fill="#262626" /><rect x="9" y="1" width="27" height="24" rx="1" fill="url(#tv)" /><rect x="9" y="10" width="18" height="15" fill="#b4b4b4" /></svg></Slot>
        <Slot><svg width="35" height="36" viewBox="0 0 35 36"><defs><linearGradient id="tm" x1="0" y1="0" x2="1" y2="1"><stop offset="0" stopColor="#9a7fd6" /><stop offset="1" stopColor="#4a4fc4" /></linearGradient></defs><path d="M18 1A17 17 0 0 1 18 35Q14 35 11 34L1 35L3 27A17 17 0 0 1 18 1Z" fill="url(#tm)" /><rect x="8" y="11" width="14" height="14" rx="2.500" fill="#fff" /><path d="M24 16L28 12V24L24 20Z" fill="#fff" /></svg></Slot>
        <Slot><svg width="36" height="36" viewBox="0 0 36 36"><path d="M0 3Q0 2 1 2H11L15 5H36V16H0Z" fill="#dc9b12" /><path d="M0 8H13L16 5H36V33Q36 34 35 34H1Q0 34 0 33Z" fill="#fdc93a" /><path d="M6 34V27Q6 24 9 24H27Q30 24 30 27V34Z" fill="#1679c8" /><path d="M11 29H25" stroke="#0b4f92" strokeWidth="2" /></svg><Ind /></Slot>
        <Slot><Chrome /><Badge $bg="#2f6420" $s={24} $x={31} $y={3} $fs={13}>R</Badge><Ind /></Slot>
        <Slot><Chrome /><Badge $bg="#ec3b83" $s={24} $x={31} $y={3} $fs={13}>R</Badge><Ind /></Slot>
        <Slot><OfficeIcon size={35} letter="X" tile="#107c41" /><Ind /></Slot>
        <Slot $on>
          <svg width="36" height="36" viewBox="0 0 36 36" fill="none">
            <path d="M4 19V2.500H18.500" stroke="#cf3f1e" strokeWidth="4" strokeDasharray="4.500 1.800" />
            <path d="M21 6.500V20L18.500 26" stroke="#8d969e" strokeWidth="3.500" /><path d="M8 19.500H27" stroke="#9aa3ab" strokeWidth="3.500" />
            <circle cx="18" cy="30" r="3.200" fill="#fff" stroke="#1b8fe0" strokeWidth="2.500" /><circle cx="31" cy="17.500" r="3.200" fill="#fff" stroke="#1b8fe0" strokeWidth="2.500" />
          </svg><Ind $on />
        </Slot>
        <Slot><OfficeIcon size={35} letter="W" cols={["#41a5ee", "#2b7cd3", "#185abd", "#103f91"]} tile="#185abd" /><Ind /></Slot>
        <Slot><svg width="36" height="38" viewBox="0 0 36 38"><path d="M18 1A17 17 0 1 1 10 34L0 37L3 27A17 17 0 0 1 18 1Z" fill="#fff" /><path d="M18 4A14 14 0 1 1 11 31L4 33L6 26A14 14 0 0 1 18 4Z" fill="#3ac351" /><path d="M12 11Q10 13 11 16Q14 24 22 26Q25 26 26 23L22 20L20 22Q16 20 15 16L16 14L14.500 11Z" fill="#fff" stroke="#fff" /></svg><Badge $bg="#0a78d6" $s={27} $x={28} $y={2} $fs={16}>19</Badge><Ind /></Slot>
        <Slot><svg width="34" height="34" viewBox="0 0 34 34"><rect y="1" width="34" height="32" rx="5" fill="#b30b00" /><path d="M15.500 8.500C18.500 6.500 18 12.500 16 16.500C14 20.500 9.500 26.500 7.500 24.500C6 22.500 12 20 17 19.200C22 18.500 27.500 18.500 27 21.500C26 24 20.500 21 18 17.500C15.500 14 13.500 10 15.500 8.500Z" fill="none" stroke="#fff" strokeWidth="1.700" /></svg><Ind /></Slot>
        <Gap $w={39} />
        <Stroke w={17} h={10} sw={2} c="#222" d="M1 9L8.500 1.500L16 9" />
        <TwoLine $ml={30} $w={36} $align="center"><T $size={17} $w={35}>ENG</T><T $size={17} $w={18}>IN</T></TwoLine>
        <Gap $w={27} /><Wifi /><Gap $w={12} />
        <Stroke w={24} h={20} c="#1b1b1b" sw={1.6} d="M1 7V13H5L10 18V2L5 7ZM13 7A4 4 0 0 1 13 13M16 4A8 8 0 0 1 16 16"><path d="M19 2A12 12 0 0 1 19 18" strokeOpacity=".3" /></Stroke>
        <Gap $w={12} />
        <svg width="25" height="16" viewBox="0 0 25 16"><rect x="1" y="1" width="20" height="14" rx="3" fill="none" stroke="#1b1b1b" strokeWidth="1.600" /><rect x="3" y="3" width="16" height="10" rx="1" fill="#1b1b1b" /><path d="M22 5V11L25 9.500V6.500Z" fill="#1b1b1b" /></svg>
        <TwoLine $ml={22} $w={95} $align="flex-end"><T $size={17} $w={75} $ls={0.15}>11:48 PM</T><T $size={17.5} $w={94} $ls={0.25}>2023-03-27</T></TwoLine>
        <NoticeDot>1</NoticeDot>
      </TaskBar>
    </Screen>
  );
}
